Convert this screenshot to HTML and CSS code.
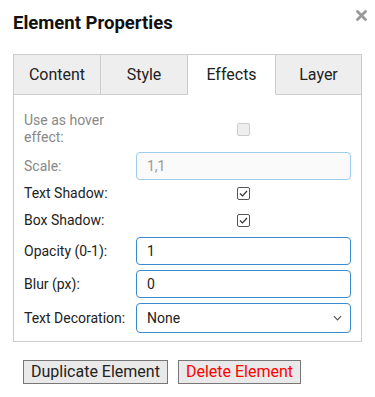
FILE: index.html
```html
<!DOCTYPE html>
<html>
<head>
<meta charset="utf-8">
<link rel="stylesheet" href="styles.css">
</head>
<body>
<div class="dialog">
  <div class="header">
    <h1 class="title">Element Properties</h1>
    <svg class="close" viewBox="0 0 11 11" width="11" height="11"><path d="M1.5 1.5 L9.5 9.5 M9.5 1.5 L1.5 9.5" stroke="#999" stroke-width="2.8" stroke-linecap="round"/></svg>
  </div>
  <div class="tabs">
    <div class="tab">Content</div>
    <div class="tab">Style</div>
    <div class="tab active">Effects</div>
    <div class="tab">Layer</div>
  </div>
  <div class="panel">
    <div class="row row-hover disabled">
      <label class="lbl">Use as hover effect:</label>
      <div class="ctl center"><span class="cb cb-disabled"></span></div>
    </div>
    <div class="row row-scale disabled">
      <label class="lbl">Scale:</label>
      <div class="ctl"><input class="inp inp-disabled" value="1,1" disabled></div>
    </div>
    <div class="row row-cb">
      <label class="lbl">Text Shadow:</label>
      <div class="ctl center"><span class="cb"><svg viewBox="0 0 13 13" width="13" height="13"><path d="M3 6.5 L5.5 9 L10 4" fill="none" stroke="#333" stroke-width="1.2"/></svg></span></div>
    </div>
    <div class="row row-cb">
      <label class="lbl">Box Shadow:</label>
      <div class="ctl center"><span class="cb"><svg viewBox="0 0 13 13" width="13" height="13"><path d="M3 6.5 L5.5 9 L10 4" fill="none" stroke="#333" stroke-width="1.2"/></svg></span></div>
    </div>
    <div class="row row-first-input">
      <label class="lbl">Opacity (0-1):</label>
      <div class="ctl"><input class="inp" value="1"></div>
    </div>
    <div class="row">
      <label class="lbl">Blur (px):</label>
      <div class="ctl"><input class="inp" value="0"></div>
    </div>
    <div class="row">
      <label class="lbl">Text Decoration:</label>
      <div class="ctl"><div class="sel"><span>None</span><svg viewBox="0 0 10 6" width="9" height="6"><path d="M1 1 L5 5 L9 1" fill="none" stroke="#555" stroke-width="1.3"/></svg></div></div>
    </div>
  </div>
  <div class="actions">
    <button class="btn">Duplicate Element</button>
    <button class="btn btn-danger">Delete Element</button>
  </div>
</div>
</body>
</html>
```
FILE: styles.css
```css
* { box-sizing: border-box; }
html, body { margin: 0; padding: 0; background: #fff; }
body { font-family: Roboto, "Noto Sans", sans-serif; color: #222; }
.dialog { padding: 0 13px 0 13px; width: 375px; }
.header { display: flex; justify-content: space-between; align-items: flex-start; height: 54px; }
.title { margin: 0; padding-top: 13px; font-size: 18.5px; font-weight: 700; color: #111; line-height: 20px; }
.close { display: block; margin-top: 10px; margin-right: -5px; }
.tabs { display: grid; grid-template-columns: 88px 87px 88px 86px; height: 41px; }
.tab { background: #eee; border: 1px solid #ccc; border-left: none; display: flex; align-items: center; justify-content: center; font-size: 16px; color: #222; padding-bottom: 1px; }
.tab:first-child { border-left: 1px solid #ccc; }
.tab.active { background: #fff; border-bottom-color: #fff; }
.panel { border: 1px solid #ccc; border-top: none; padding: 17px 10px 9px 10px; height: 247px; }
.row { display: grid; grid-template-columns: 112px 1fr; align-items: center; margin-bottom: 5px; font-size: 14px; }
.lbl { color: #222; line-height: 17px; }
.disabled .lbl { color: #888; }
.row-hover { height: 34px; margin-bottom: 6px; }
.row-hover .lbl { padding-right: 20px; }
.row-scale { margin-bottom: 2px; }
.row-cb { height: 22px; margin-bottom: 5px; }
.row-first-input { margin-top: 6px; }
.ctl { display: flex; }
.ctl.center { justify-content: center; }
.cb { width: 13px; height: 13px; border: 1px solid #555; border-radius: 2px; display: block; background: #fff; position: relative; }
.cb svg { position: absolute; left: -1px; top: -1px; }
.cb-disabled { border-color: #ccc; background: #eee; }
.inp { width: 100%; height: 28px; border: 1px solid #3b8bd0; border-radius: 4px; padding: 0 10px; font-family: Roboto, sans-serif; font-size: 14px; color: #222; background: #fff; outline: none; }
.inp-disabled { border-color: #9fcdee; background: #fafafa; color: #999; }
.sel { width: 100%; height: 30px; border: 1px solid #3b8bd0; border-radius: 4px; padding: 0 8px 0 10px; display: flex; align-items: center; justify-content: space-between; font-size: 14px; color: #222; }
.actions { display: flex; gap: 10px; padding: 18px 0 0 10px; }
.btn { font-family: Roboto, sans-serif; font-size: 16px; height: 24px; padding: 0 7px; background: #e9e9e9; border: 1px solid #777; border-radius: 0; color: #222; line-height: 20px; }
.btn-danger { color: #f00; }
```
